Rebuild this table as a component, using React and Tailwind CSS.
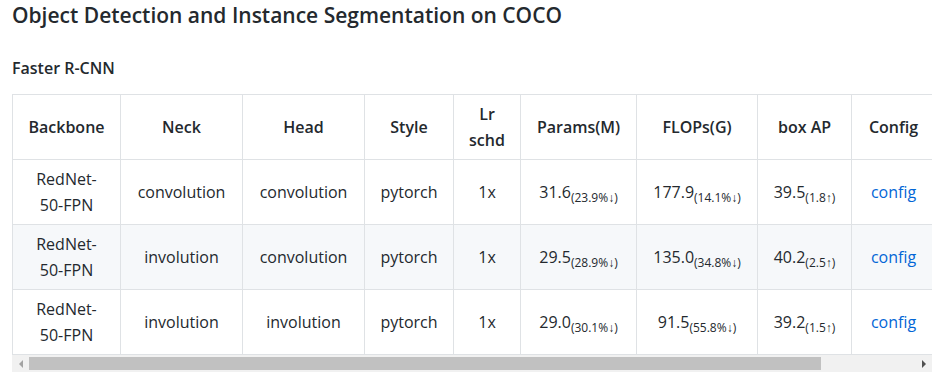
const rows = [
  { neck: 'convolution', head: 'convolution', params: '31.6', pd: '(23.9%↓)', flops: '177.9', fd: '(14.1%↓)', ap: '39.5', ad: '(1.8↑)' },
  { neck: 'involution', head: 'convolution', params: '29.5', pd: '(28.9%↓)', flops: '135.0', fd: '(34.8%↓)', ap: '40.2', ad: '(2.5↑)' },
  { neck: 'involution', head: 'involution', params: '29.0', pd: '(30.1%↓)', flops: '91.5', fd: '(55.8%↓)', ap: '39.2', ad: '(1.5↑)' },
];

const cols = ['w-[108px]', 'w-[122px]', 'w-[122px]', 'w-[89px]', 'w-[67px]', 'w-[116px]', 'w-[121px]', 'w-[94px]', 'w-[84px]'];

function Num({ v, d }) {
  return (
    <span>
      {v}
      <sub className="text-[12px] align-baseline relative top-[4px]">{d}</sub>
    </span>
  );
}

export default function App() {
  const td = 'border border-[#dfe2e5] px-[13px] py-[6px] text-center align-middle';
  return (
    <div className="bg-white text-[#24292e] font-['Open_Sans',sans-serif] w-[945px] h-[379px] overflow-hidden pl-[12px] pt-[3px]">
      <h3 className="text-[21px] font-semibold leading-[25px]">Object Detection and Instance Segmentation on COCO</h3>
      <h4 className="mt-[30px] text-[16px] font-semibold leading-[20px]">Faster R-CNN</h4>

      <div className="mt-[16px] w-[920px] overflow-hidden">
        <table className="table-fixed border-collapse w-[923px] text-[16px] leading-[26px]">
          <colgroup>
            {cols.map((c, i) => (
              <col key={i} className={c} />
            ))}
          </colgroup>
          <thead>
            <tr className="bg-white">
              {['Backbone', 'Neck', 'Head', 'Style', 'Lr schd', 'Params(M)', 'FLOPs(G)', 'box AP', 'Config'].map((h) => (
                <th key={h} className={`${td} font-semibold`}>{h}</th>
              ))}
            </tr>
          </thead>
          <tbody>
            {rows.map((r, i) => (
              <tr key={i} className={i % 2 === 1 ? 'bg-[#f6f8fa]' : 'bg-white'}>
                <td className={td}>RedNet-50-FPN</td>
                <td className={td}>{r.neck}</td>
                <td className={td}>{r.head}</td>
                <td className={td}>pytorch</td>
                <td className={td}>1x</td>
                <td className={td}><Num v={r.params} d={r.pd} /></td>
                <td className={td}><Num v={r.flops} d={r.fd} /></td>
                <td className={td}><Num v={r.ap} d={r.ad} /></td>
                <td className={td}><a className="text-[#0366d6]" href="#">config</a></td>
              </tr>
            ))}
          </tbody>
        </table>

        {/* horizontal scrollbar */}
        <div className="flex items-center h-[17px] bg-[#f1f1f1]">
          <div className="w-[17px] h-[17px] flex items-center justify-center">
            <div className="w-0 h-0 border-y-[4px] border-y-transparent border-r-[4px] border-r-[#a3a3a3]" />
          </div>
          <div className="w-[792px] h-[13px] bg-[#c1c1c1]" />
          <div className="flex-1" />
          <div className="w-[17px] h-[17px] flex items-center justify-center">
            <div className="w-0 h-0 border-y-[4px] border-y-transparent border-l-[4px] border-l-[#505050]" />
          </div>
        </div>
      </div>
    </div>
  );
}
